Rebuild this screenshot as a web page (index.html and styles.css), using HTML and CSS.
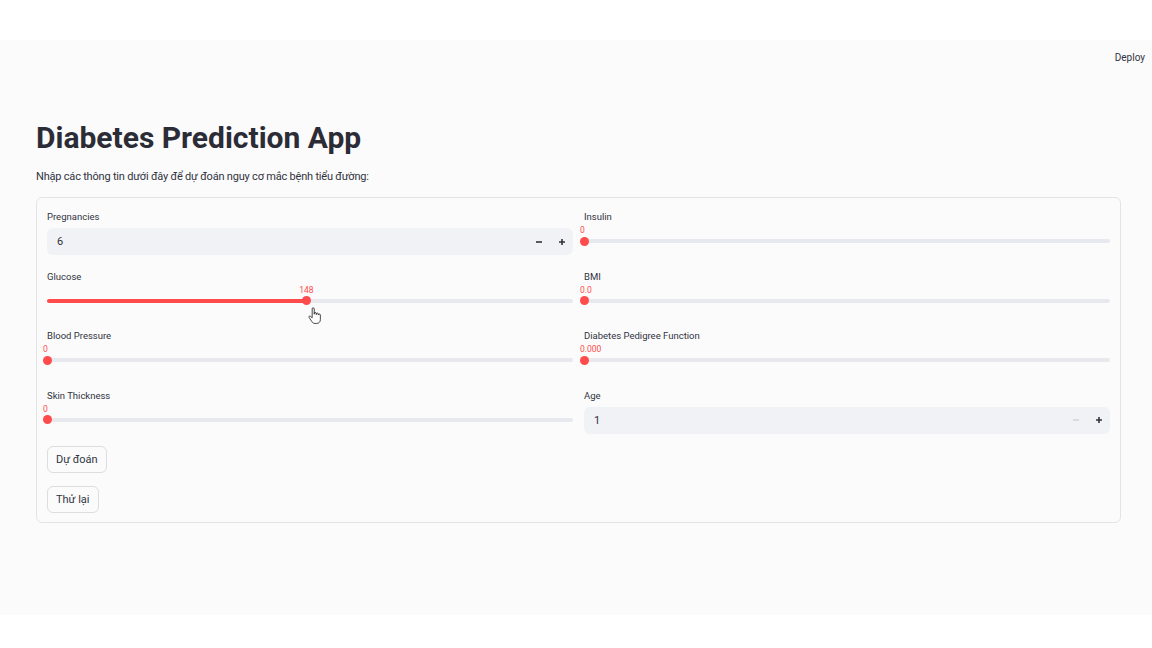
FILE: index.html
```html
<!DOCTYPE html>
<html lang="vi">
<head>
<meta charset="utf-8">
<title>Diabetes Prediction App</title>
<link rel="stylesheet" href="styles.css">
</head>
<body>
<div class="topband"></div>
<main class="main">
  <div class="toolbar"><span class="deploy">Deploy</span></div>
  <section class="content">
    <h1 class="title">Diabetes Prediction App</h1>
    <p class="subtitle">Nhập các thông tin dưới đây để dự đoán nguy cơ mắc bệnh tiểu đường:</p>
    <div class="form">
      <div class="grid">
        <div class="field">
          <label class="label">Pregnancies</label>
          <div class="numinput">
            <span class="numval">6</span>
            <span class="step"><svg width="8" height="8" viewBox="0 0 8 8"><path d="M1 4h6" stroke="#31333f" stroke-width="1.6"/></svg></span>
            <span class="step"><svg width="8" height="8" viewBox="0 0 8 8"><path d="M1 4h6M4 1v6" stroke="#31333f" stroke-width="1.6"/></svg></span>
          </div>
        </div>
        <div class="field">
          <label class="label">Insulin</label>
          <div class="slider">
            <div class="track"></div>
            <span class="thumb" style="left:0%"></span>
            <span class="sval sval-start" style="left:0%">0</span>
          </div>
        </div>

        <div class="field">
          <label class="label">Glucose</label>
          <div class="slider">
            <div class="track"><div class="fill" style="width:49.3%"></div></div>
            <span class="thumb" style="left:49.3%"></span>
            <span class="sval sval-mid" style="left:49.3%">148</span>
          </div>
        </div>
        <div class="field">
          <label class="label">BMI</label>
          <div class="slider">
            <div class="track"></div>
            <span class="thumb" style="left:0%"></span>
            <span class="sval sval-start" style="left:0%">0.0</span>
          </div>
        </div>

        <div class="field">
          <label class="label">Blood Pressure</label>
          <div class="slider">
            <div class="track"></div>
            <span class="thumb" style="left:0%"></span>
            <span class="sval sval-start" style="left:0%">0</span>
          </div>
        </div>
        <div class="field">
          <label class="label">Diabetes Pedigree Function</label>
          <div class="slider">
            <div class="track"></div>
            <span class="thumb" style="left:0%"></span>
            <span class="sval sval-start" style="left:0%">0.000</span>
          </div>
        </div>

        <div class="field">
          <label class="label">Skin Thickness</label>
          <div class="slider">
            <div class="track"></div>
            <span class="thumb" style="left:0%"></span>
            <span class="sval sval-start" style="left:0%">0</span>
          </div>
        </div>
        <div class="field">
          <label class="label">Age</label>
          <div class="numinput">
            <span class="numval">1</span>
            <span class="step"><svg width="8" height="8" viewBox="0 0 8 8"><path d="M1 4h6" stroke="#c9ccd3" stroke-width="1.2"/></svg></span>
            <span class="step"><svg width="8" height="8" viewBox="0 0 8 8"><path d="M1 4h6M4 1v6" stroke="#31333f" stroke-width="1.6"/></svg></span>
          </div>
        </div>
      </div>
      <div class="actions">
        <button class="btn">Dự đoán</button>
        <button class="btn">Thử lại</button>
      </div>
    </div>
  </section>
</main>
<div class="bottomband"></div>
<svg class="cursor" width="13" height="18" viewBox="0 0 14 18"><path d="M4.5 9V1.3a1.1 1.1 0 0 1 2.2 0V7V6.3a1.1 1.1 0 0 1 2.2 0V7.5V7a1.1 1.1 0 0 1 2.2 0V8a1.1 1.1 0 0 1 2.2 0V13c0 2.2-1.5 4-3.8 4H7.5c-1.6 0-2.6-.8-3.4-2L1.2 10.6a1 1 0 0 1 1.6-1.2L4.5 11Z" fill="#fff" stroke="#222" stroke-width="0.9" stroke-linejoin="round"/></svg>
</body>
</html>
```

FILE: styles.css
```css
* { box-sizing: border-box; }
html, body { margin: 0; padding: 0; }
body {
  background: #ffffff;
  font-family: Roboto, "Noto Sans", sans-serif;
  color: #31333f;
  width: 1152px;
  height: 648px;
  overflow: hidden;
  position: relative;
}
.topband { height: 40px; background: #ffffff; }
.bottomband { height: 33px; background: #ffffff; }
.main {
  height: 575px;
  background: #fbfbfb;
}
.toolbar {
  height: 34px;
  padding: 12px 7px 0 0;
  display: flex;
  justify-content: flex-end;
}
.deploy { font-size: 10px; line-height: 12px; color: #31333f; }
.content { padding: 44px 31px 0 36px; }
.title {
  margin: 0;
  font-size: 30px;
  line-height: 40px;
  font-weight: 700;
  color: #2b2c36;
}
.subtitle {
  margin: 11px 0 0;
  font-size: 11px;
  letter-spacing: -0.2px;
  line-height: 16px;
  color: #31333f;
}
.form {
  margin-top: 12px;
  border: 1px solid #e4e4e6;
  border-radius: 6px;
  padding: 12px 10px 9px;
}
.grid {
  display: grid;
  grid-template-columns: 1fr 1fr;
  column-gap: 11px;
  row-gap: 14.5px;
}
.field { display: flex; flex-direction: column; }
.label {
  font-size: 9.5px;
  line-height: 13px;
  margin-bottom: 5px;
  color: #31333f;
}
.numinput {
  height: 27px;
  background: #f0f2f6;
  border-radius: 6px;
  display: flex;
  align-items: center;
}
.numval { flex: 1; padding-left: 10px; font-size: 11px; color: #31333f; }
.step {
  width: 23px;
  height: 27px;
  display: flex;
  align-items: center;
  justify-content: center;
}
.slider { position: relative; height: 27px; }
.track {
  position: absolute;
  left: 0; right: 0; top: 11px;
  height: 4px;
  border-radius: 2px;
  background: #e7e9ee;
}
.fill { height: 100%; background: #ff4b4b; border-radius: 2px; }
.thumb {
  position: absolute;
  top: 8.5px;
  width: 9px; height: 9px;
  margin-left: -4.5px;
  border-radius: 50%;
  background: #ff4b4b;
}
.sval {
  position: absolute;
  top: -3px;
  font-size: 8.5px;
  line-height: 10px;
  color: #ff4b4b;
  white-space: nowrap;
}
.sval-start { margin-left: -4px; }
.sval-mid { transform: translateX(-50%); }
.actions {
  display: flex;
  flex-direction: column;
  align-items: flex-start;
  gap: 13px;
  margin-top: 12.5px;
}
.btn {
  height: 27px;
  padding: 0 8px;
  font-family: Roboto, "Noto Sans", sans-serif;
  font-size: 11px;
  color: #31333f;
  background: transparent;
  border: 1px solid #dcdde1;
  border-radius: 6px;
}
.cursor { position: absolute; left: 308px; top: 307px; }
```
